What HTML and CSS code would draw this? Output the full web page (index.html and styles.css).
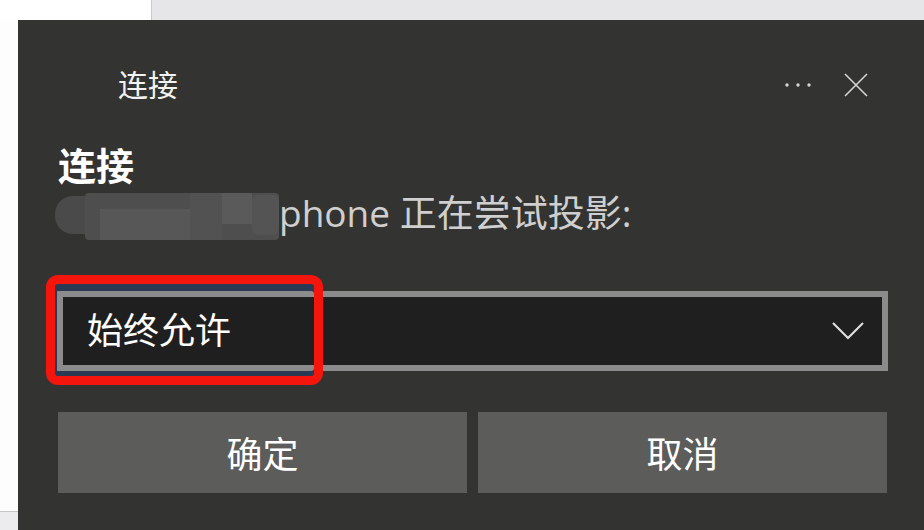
FILE: index.html
```html
<!DOCTYPE html>
<html lang="zh-CN">
<head>
  <meta charset="UTF-8" />
  <title>连接</title>
  <link rel="stylesheet" href="styles.css">
</head>
<body>

  <div class="topstrip">
    <div class="topstrip-left"></div>
    <div class="topstrip-right"></div>
  </div>

  <div class="main">
    <div class="side">
      <div class="side-top"></div>
      <div class="side-bottom"></div>
    </div>

    <div class="dialog">
      <div class="titlebar">
        <span class="title">连接</span>
        <div class="title-actions">
          <svg class="more" width="28" height="6" viewBox="0 0 28 6">
            <circle cx="3" cy="3" r="1.7" fill="#d4d4d4" />
            <circle cx="14" cy="3" r="1.7" fill="#d4d4d4" />
            <circle cx="25" cy="3" r="1.7" fill="#d4d4d4" />
          </svg>
          <svg class="close" width="26" height="26" viewBox="0 0 26 26">
            <path d="M2 2 L24 24 M24 2 L2 24" stroke="#d4d4d4" stroke-width="1.6" fill="none" />
          </svg>
        </div>
      </div>

      <div class="heading">连接</div>
      <div class="message">
        <svg class="blur-name" width="224" height="50" viewBox="0 0 224 50">
          <rect x="0" y="5" width="60" height="38" rx="18" fill="#4a4a4a" />
          <rect x="30" y="2" width="194" height="47" rx="4" fill="#4e4e4e" />
          <rect x="45" y="18" width="90" height="31" fill="#575757" />
          <rect x="135" y="2" width="32" height="47" fill="#525252" />
          <rect x="167" y="2" width="30" height="31" fill="#5a5a5a" />
          <rect x="197" y="4" width="27" height="40" rx="6" fill="#545454" />
        </svg><span>phone 正在尝试投影:</span>
      </div>

      <div class="select-wrap">
        <div class="select">
          <span class="select-value">始终允许</span>
          <svg class="chevron" width="32" height="18" viewBox="0 0 32 18">
            <path d="M1 1 L16 16 L31 1" stroke="#e2e2e2" stroke-width="2" fill="none" />
          </svg>
        </div>
        <div class="mark"></div>
      </div>

      <div class="buttons">
        <button class="btn">确定</button>
        <button class="btn">取消</button>
      </div>
    </div>
  </div>

</body>
</html>
```

FILE: styles.css
```css
html, body {
  margin: 0;
  padding: 0;
  height: 100%;
  background: #fff;
  font-family: "Open Sans", "Noto Sans CJK SC", sans-serif;
  overflow: hidden;
}
.topstrip {
  display: flex;
  height: 20px;
}
.topstrip-left {
  width: 151px;
  background: #fff;
  border-right: 1px solid #c9c9cb;
}
.topstrip-right {
  flex: 1;
  background: #e6e6e8;
}
.main {
  display: flex;
  height: 510px;
}
.side {
  width: 18px;
  display: flex;
  flex-direction: column;
}
.side-top {
  flex: 1;
  background: #fdfdfd;
  border-bottom: 1px solid #c4c4c4;
}
.side-bottom {
  height: 18px;
  background: #ececee;
}
.dialog {
  flex: 1;
  background: #333331;
  padding: 0 37px 0 40px;
  color: #fff;
}
.titlebar {
  box-sizing: border-box;
  height: 122px;
  padding-top: 8px;
  display: flex;
  align-items: center;
  justify-content: space-between;
}
.title {
  margin-left: 60px;
  font-size: 30px;
  line-height: 40px;
  color: #f2f2f2;
}
.title-actions {
  display: flex;
  align-items: center;
  gap: 31px;
  margin-right: 18px;
}
.heading {
  font-size: 38px;
  font-weight: bold;
  line-height: 44px;
  margin-top: 1px;
}
.message {
  display: flex;
  align-items: center;
  margin-left: -3px;
  height: 52px;
  font-size: 37px;
  line-height: 52px;
  color: #cfcfcf;
}
.blur-name {
  display: block;
  margin-top: 6px;
  margin-right: 0;
}
.select-wrap {
  position: relative;
  margin: 52px -1px 0 -1px;
}
.select {
  box-sizing: border-box;
  height: 80px;
  border: 6px solid #8b8b8b;
  background: #1f1f1f;
  display: flex;
  align-items: center;
  justify-content: space-between;
  padding: 0 18px 0 24px;
}
.select-value {
  font-size: 36px;
  line-height: 48px;
  color: #fff;
}
.chevron {
  display: block;
}
/* red outline drawn over the first part of the select */
.mark {
  position: absolute;
  left: -11px;
  top: -16px;
  width: 277px;
  height: 110px;
  box-sizing: border-box;
  border: 9px solid #f4150c;
  border-radius: 12px;
  box-shadow: inset 0 7px 0 #2a3a54, inset 0 -5px 0 #2a3a54, inset 2px 0 0 #2a3a54;
}
.buttons {
  display: flex;
  gap: 11px;
  margin-top: 41px;
}
.btn {
  flex: 1;
  height: 81px;
  border: none;
  background: #5c5c5b;
  color: #fff;
  font-family: "Open Sans", "Noto Sans CJK SC", sans-serif;
  font-size: 36px;
  padding: 0;
}
```
